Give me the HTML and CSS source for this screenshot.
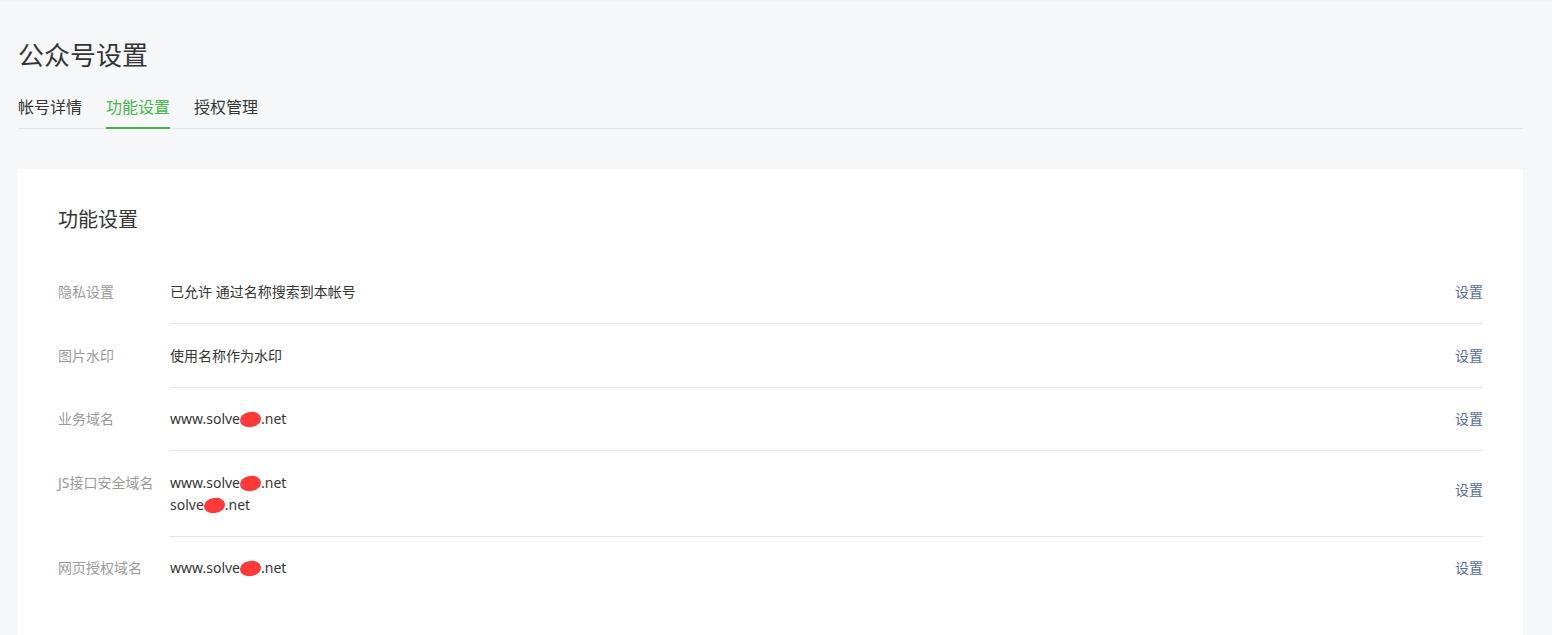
FILE: index.html
```html
<!DOCTYPE html>
<html lang="zh-CN">
<head>
<meta charset="utf-8">
<title>公众号设置</title>
<link rel="stylesheet" href="styles.css">
</head>
<body>
<div class="page">
  <h1 class="title">公众号设置</h1>
  <nav class="tabs">
    <a class="tab">帐号详情</a>
    <a class="tab active">功能设置</a>
    <a class="tab">授权管理</a>
  </nav>
  <section class="card">
    <h2 class="card-title">功能设置</h2>
    <ul class="list">
      <li class="row">
        <div class="label">隐私设置</div>
        <div class="body">
          <div class="value">已允许 通过名称搜索到本帐号</div>
          <a class="link">设置</a>
        </div>
      </li>
      <li class="row">
        <div class="label">图片水印</div>
        <div class="body">
          <div class="value">使用名称作为水印</div>
          <a class="link">设置</a>
        </div>
      </li>
      <li class="row">
        <div class="label">业务域名</div>
        <div class="body">
          <div class="value">www.solve<span class="mask"></span>.net</div>
          <a class="link">设置</a>
        </div>
      </li>
      <li class="row">
        <div class="label">JS接口安全域名</div>
        <div class="body">
          <div class="value">
            <div>www.solve<span class="mask"></span>.net</div>
            <div>solve<span class="mask"></span>.net</div>
          </div>
          <a class="link link-multi">设置</a>
        </div>
      </li>
      <li class="row">
        <div class="label">网页授权域名</div>
        <div class="body">
          <div class="value">www.solve<span class="mask"></span>.net</div>
          <a class="link">设置</a>
        </div>
      </li>
    </ul>
  </section>
</div>
</body>
</html>
```
FILE: styles.css
```css
html, body {
  margin: 0;
  padding: 0;
}
body {
  background: #f6f7f9;
  font-family: "Noto Sans", "Noto Sans CJK SC", sans-serif;
  color: #353535;
  border-top: 2px solid #f2f3f5;
  min-height: 633px;
}
.page {
  padding: 35px 29px 0 18px;
}
.title {
  margin: 0;
  font-size: 26px;
  line-height: 36px;
  font-weight: 400;
  color: #353535;
}
.tabs {
  margin-top: 23px;
  display: flex;
  gap: 24px;
  border-bottom: 1px solid #e0e3e7;
}
.tab {
  font-size: 16px;
  line-height: 22px;
  padding-bottom: 9px;
  border-bottom: 2px solid transparent;
  margin-bottom: -1px;
  color: #353535;
  cursor: pointer;
}
.tab.active {
  color: #44b549;
  border-bottom-color: #44b549;
}
.card {
  margin-top: 40px;
  background: #fff;
  border-radius: 2px;
  padding: 37px 40px 40px;
}
.card-title {
  margin: 0;
  font-size: 20px;
  line-height: 28px;
  font-weight: 400;
  color: #353535;
}
.list {
  list-style: none;
  margin: 26.5px 0 0;
  padding: 0;
}
.row {
  display: flex;
  font-size: 14px;
  line-height: 22px;
}
.label {
  width: 112px;
  flex-shrink: 0;
  color: #9a9a9a;
  padding: 20.5px 0 20px;
}
.body {
  flex: 1;
  display: flex;
  align-items: center;
  justify-content: space-between;
  padding: 20.5px 0 20px;
  border-bottom: 1px solid #e7e7eb;
}
.row:last-child .body {
  border-bottom: none;
}
.value {
  color: #353535;
}
.link {
  color: #576b95;
  cursor: pointer;
}
.link-multi {
  align-self: flex-start;
  margin-top: 7px;
}
.mask {
  display: inline-block;
  width: 21px;
  height: 15px;
  background: #ff3838;
  border-radius: 50% 45% 50% 45%;
  vertical-align: -3px;
  transform: rotate(-6deg);
}
```
